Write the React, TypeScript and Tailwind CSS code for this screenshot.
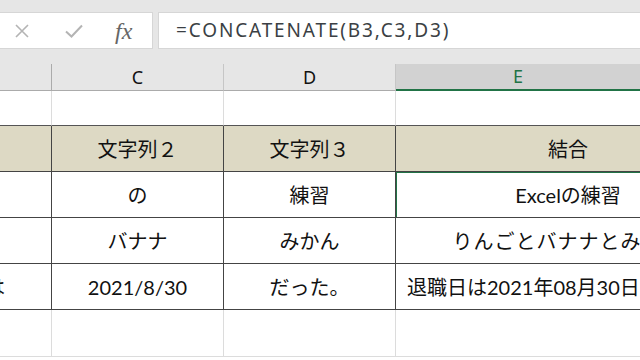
const cellFont = { fontFamily: 'Lato, "Noto Sans CJK JP", sans-serif' };

function Cell({ w, className = '', children }: { w: string; className?: string; children?: React.ReactNode }) {
  return <div className={`${w} shrink-0 h-full flex items-center overflow-hidden whitespace-nowrap ${className}`}>{children}</div>;
}

export default function App() {
  return (
    <div className="w-[640px] h-[360px] overflow-hidden bg-white text-[#111]" style={cellFont}>
      {/* formula bar */}
      <div className="h-[64px] bg-[#e6e6e6] pt-[12px] flex gap-[5px]">
        <div className="w-[153px] h-[37px] bg-white border border-l-0 border-[#d6d6d6] flex items-center">
          <svg className="ml-[14px]" width="16" height="16" viewBox="0 0 16 16">
            <path d="M2 2 L14 14 M14 2 L2 14" stroke="#b4b4b4" strokeWidth="1.6" fill="none" />
          </svg>
          <svg className="ml-[34px]" width="20" height="16" viewBox="0 0 20 16">
            <path d="M2 8.5 L7.5 13.5 L18 2.5" stroke="#b4b4b4" strokeWidth="2" fill="none" />
          </svg>
          <span className="ml-[31px] text-[24px] italic text-[#666] leading-none" style={{ fontFamily: '"Liberation Serif", serif' }}>fx</span>
        </div>
        <div className="flex-1 h-[37px] bg-white border border-r-0 border-[#d6d6d6] flex items-center pl-[17px]">
          <span className="text-[19px] text-[#3b3f44] tracking-[1.85px]" style={{ fontFamily: '"Noto Sans", sans-serif' }}>=CONCATENATE(B3,C3,D3)</span>
        </div>
      </div>

      {/* column headers */}
      <div className="h-[27px] flex bg-[#e6e6e6] text-[18px]" style={{ fontFamily: '"Noto Sans", sans-serif' }}>
        <Cell w="w-[52px]" className="border-r border-b border-[#ababab]" />
        <Cell w="w-[172px]" className="justify-center border-r border-b border-r-[#c6c6c6] border-b-[#ababab] text-[#111]">C</Cell>
        <Cell w="w-[172px]" className="justify-center border-r border-b border-r-[#c6c6c6] border-b-[#ababab] text-[#111]">D</Cell>
        <Cell w="flex-1" className="justify-center bg-[#d2d2d2] border-b-2 border-[#217346] text-[#217346]">E</Cell>
      </div>

      {/* row 2 (blank) */}
      <div className="h-[35px] flex">
        <Cell w="w-[52px]" className="border-r border-r-[#dcdcdc] border-b border-b-[#555]" />
        <Cell w="w-[172px]" className="border-r border-r-[#dcdcdc] border-b border-b-[#555]" />
        <Cell w="w-[172px]" className="border-r border-r-[#dcdcdc] border-b border-b-[#555]" />
        <Cell w="flex-1" className="border-b border-b-[#555]" />
      </div>

      {/* header row */}
      <div className="h-[46px] flex bg-[#ddd9c4] text-[20px]">
        <Cell w="w-[52px]" className="border-r border-b border-[#444]" />
        <Cell w="w-[172px]" className="justify-center border-r border-b border-[#444]">文字列２</Cell>
        <Cell w="w-[172px]" className="justify-center border-r border-b border-[#444]">文字列３</Cell>
        <Cell w="flex-1" className="border-b border-[#444]">
          <span className="w-[344px] shrink-0 text-center">結合</span>
        </Cell>
      </div>

      {/* data rows */}
      <div className="h-[46px] flex text-[20px]">
        <Cell w="w-[52px]" className="border-r border-b border-[#444]" />
        <Cell w="w-[172px]" className="justify-center border-r border-b border-[#444]">の</Cell>
        <Cell w="w-[172px]" className="justify-center border-r border-b border-[#444]">練習</Cell>
        <Cell w="flex-1" className="border-b border-[#444] relative">
          <div className="absolute left-[-1px] top-[-1px] w-[346px] h-[48px] border-2 border-[#217346]" />
          <span className="w-[344px] shrink-0 text-center">Excelの練習</span>
        </Cell>
      </div>
      <div className="h-[46px] flex text-[20px]">
        <Cell w="w-[52px]" className="border-r border-b border-[#444]" />
        <Cell w="w-[172px]" className="justify-center border-r border-b border-[#444]">バナナ</Cell>
        <Cell w="w-[172px]" className="justify-center border-r border-b border-[#444]">みかん</Cell>
        <Cell w="flex-1" className="border-b border-[#444]">
          <span className="w-[344px] shrink-0 text-center tracking-[1px]">りんごとバナナとみかん</span>
        </Cell>
      </div>
      <div className="h-[46px] flex text-[20px]">
        <Cell w="w-[52px]" className="border-r border-b border-[#444]">
          <span className="ml-[-75px]">退職日は</span>
        </Cell>
        <Cell w="w-[172px]" className="justify-center border-r border-b border-[#444]">2021/8/30</Cell>
        <Cell w="w-[172px]" className="justify-center border-r border-b border-[#444]">だった。</Cell>
        <Cell w="flex-1" className="border-b border-[#444] pl-[11px]">退職日は2021年08月30日</Cell>
      </div>

      {/* blank row */}
      <div className="h-[47px] flex">
        <Cell w="w-[52px]" className="border-r border-b border-[#dcdcdc]" />
        <Cell w="w-[172px]" className="border-r border-b border-[#dcdcdc]" />
        <Cell w="w-[172px]" className="border-r border-b border-[#dcdcdc]" />
        <Cell w="flex-1" className="border-b border-[#dcdcdc]" />
      </div>
    </div>
  );
}
